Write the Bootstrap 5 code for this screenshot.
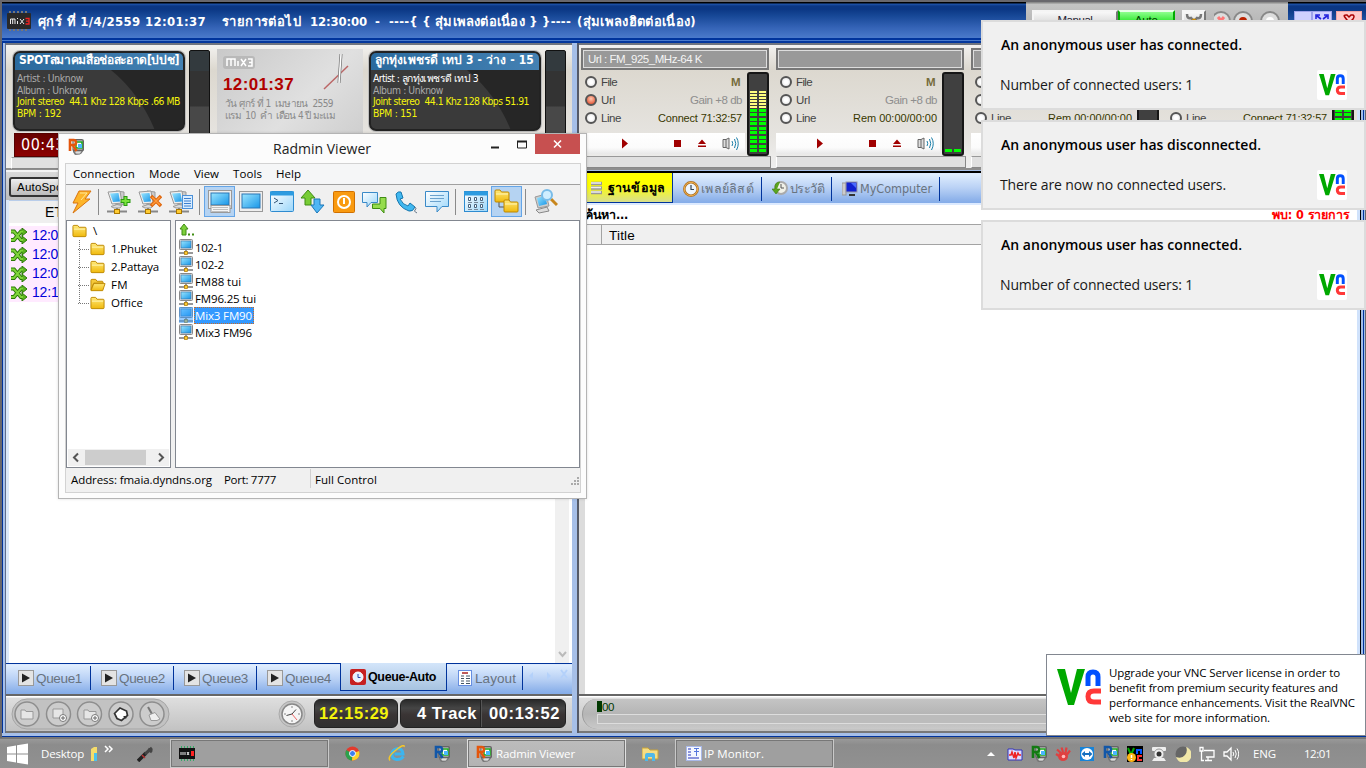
<!DOCTYPE html>
<html lang="th">
<head>
<meta charset="utf-8">
<title>MiX3 – Radmin Viewer</title>
<link href="https://cdn.jsdelivr.net/npm/bootstrap@5.3.0/dist/css/bootstrap.min.css" rel="stylesheet">
<style>
:root{--ui:"Open Sans","Noto Sans",sans-serif;--tahoma:"DejaVu Sans Condensed","DejaVu Sans",sans-serif;--arial:"Liberation Sans",Arial,sans-serif}
html,body{width:1366px;height:768px;overflow:hidden}
body{font:11.5px/1 var(--ui);color:#000;background:#7f7f83}
svg{display:block;flex:none}
[data-w]{white-space:pre;display:inline-block;flex:none}
/* small left gaps used between icons and labels */
.gn2{margin-left:-2px}.gn1{margin-left:-1px}.g1{margin-left:1px}.g2{margin-left:2px}.g3{margin-left:3px}.g5{margin-left:5px}.g6{margin-left:6px}.g7{margin-left:7px}.g9{margin-left:9px}.g10{margin-left:10px}.g12{margin-left:12px}.g14{margin-left:14px}.g16{margin-left:16px}.g22{margin-left:22px}.g28{margin-left:28px}.g106{margin-left:106px}.g188{margin-left:188px}
.desk{width:1366px;height:768px}
.mixer{height:738px;background:#a6bfe8;border-top:2px solid #69686d;border-left:2px solid #69686d;box-shadow:inset 1px 0 #00339b}
.titlebar{height:41px;background:linear-gradient(#000 0 1px,#1f55ac 2px,#0d3884 4px,#0b3784 7px,#174897 14px,#3362b5 25px,#4a7acb 36px,#00349c 36px 38px,#4a7acb 38px 39px,#04379c 39px 41px);font:bold 13px/39px var(--tahoma);color:#fff}
.titlebar .caption{padding-left:5px;background:inherit;border-radius:0 8px 0 0}
.applogo{margin-top:9px}
.topctl{width:262px;background:linear-gradient(#8c8c8c 0 1px,#c4c4c4 2px,#a9a9a9);padding:8px 0 0 6px}
.topctl .key{height:26px;border:2px solid #f5f5f5;border-right-color:#777;background:linear-gradient(#f8f8f8,#d4d4d4 60%);font:11.5px/17px var(--arial);color:#223}
.k1{width:88px}.k2{width:58px}.k3{width:25px}
.topctl .go{border-color:#e8ffe8 #0a0;background:linear-gradient(#8dff8d,#10e010 60%);color:#040}
.winctl{width:78px;border-radius:6px 6px 0 0;padding:9px 4px 0 6px}
.winctl div{height:24px;width:20px;background:#cfd1ff;border:1px solid #9ea3ea}
.winctl .x{width:26px;background:#ffc9c9;border-color:#f0a5a5}
.left{width:568px;margin-left:3px;border-left:1px solid #5e6d8c}
.right{width:780px;margin-left:5px;border-left:2px solid #555a68}
.edge{width:9px;background:linear-gradient(90deg,#d0e2fb 0 3px,#000 3px 4px,#a3bde6 4px 6px,#00339b 6px 7px,#a3bde6 7px 8px,#69686d 8px)}
.decks{height:127px;background:linear-gradient(#f3f2f0,#dcd8cf 20%,#e6e4e0 75%,#efefef);border-top:2px solid #70757f;border-bottom:2px solid #8e8e8e}
.decks.rowr{padding:3px 0 0 2px}
.cards{height:88px;padding:5px 0 0 7px}
.player{width:172px;height:80px;margin-top:1px;border:2px solid #222;border-radius:7px;background:radial-gradient(circle at 0 175%,#3a3a3a 0 150px,#262626 151px);color:#aaa;font:10.3px/11.5px var(--tahoma);overflow:hidden;box-shadow:0 0 0 1px #bbb}
.player h6{height:17px;margin:0 0 3px;padding:0 0 0 4px;font:bold 12px/15px var(--tahoma);color:#fff;background:linear-gradient(90deg,#2a6a9e,#4481b3)}
.player p{margin:0;padding-left:2px;height:11.5px}
.player .yel,.lcd.yel{color:#f4f40c}
.vu{width:21px;height:100px;border:1px solid #111;background:linear-gradient(#333a3e 0 20px,#333 20px 55px,#484848 56px);border-radius:2px}
.clock{width:146px;height:84px;margin:-1px 6px 0 7px;background:linear-gradient(135deg,#c9c9c9,#e0e0e0 60%,#cfcfcf);color:#8a8a8a;font:10px/12px var(--tahoma);padding:7px 6px 0}
.clock .top{height:16px}
.clock b{font:bold 17px/26px var(--arial);color:#b00000}
.hands{margin-top:-2px}
.redcount{width:60px;height:24px;margin-left:8px;background:linear-gradient(#600,#8c0000);border:1px solid #500;color:#fff;font:16px/22px var(--tahoma);padding-left:6px}
.sunk{width:190px;height:12px;margin-top:2px;background:#e0e0e0;border:1px solid #888;border-top-color:#999;border-left-color:#fff}
.left .sunk{width:90px;margin:0 0 0 5px}
.toolrow{height:30px;padding:5px 0 0 3px;background:linear-gradient(#d9d9d9,#bcbcbc);border-top:2px solid #f4f4f4}
.autob{width:90px;height:20px;border:2px solid #333;border-radius:3px;background:linear-gradient(#eee,#bbb);font:11.5px/16px var(--arial);padding-left:6px}
.qhead{height:23px;background:#efefef;font:14px/22px var(--arial);border-top:1px solid #b9cdea;padding-left:36px}
.qrow{height:19px;width:200px;background:#ffeaff;color:#0000d8;font:14px/19px var(--arial);gap:5px;padding-left:1px}
.qrow:nth-child(2){margin-top:3px}
.listbox{background:#fff;border-left:3px solid #dce9fa}
.sb{width:14px;background:#f0f0f0;margin-right:3px}
.tabs{height:31px;border-top:1px solid #00339b;background:linear-gradient(#e3f0ff,#b9d1f5 50%,#8db2ea 90%,#84ace8);box-shadow:inset 0 1px #dceaff}
.tabs .tb{width:83px;padding-left:10px;color:#68737f;font:13.5px/23px var(--arial);border-right:1px solid #00339b;height:24px;margin-top:2px}
.tabs .first{width:85px;padding-left:12px}
.tabs .nosep{border:0}
.tabs .cur{width:107px;padding-left:9px;border:1px solid #00339b;border-top:0;height:28px;margin-top:-1px;color:#000;font-weight:bold;font-size:12.5px;line-height:28px;background:linear-gradient(#d3e5fa,#a7c3e0)}
.tabs .lay{width:76px;padding-left:11px}
.foot{height:39px;border-top:2px solid #666;border-bottom:2px solid #777;background:linear-gradient(#fff 0 1px,#dedede 2px,#c2c2c2)}
.lcd{height:29px;border-radius:6px;background:linear-gradient(#2a2a2a,#454545 30%,#3a3434 55%,#303030);border:1px solid #222;color:#fff;font:bold 16.5px/27px var(--arial)}
.lcd.a{width:84px;margin-left:7px;padding-left:4px}
.lcd.b{width:166px;margin-left:2px;padding-left:16px}
.split{border-left:1px solid #222;box-shadow:inset 1px 0 #555;margin-left:3px;width:9px}
.deck{width:191px;margin-right:4px}
.deck .lab{height:22px;width:188px;background:#999;border:2px solid #777;box-shadow:inset 0 0 0 1px #ddd;color:#f4f4f4;font:11.5px/18px var(--arial);padding-left:5px}
.deck .opts{width:161px;height:58px;padding:3px 0 0 4px}
.deck .ln{height:18px;font:11.5px/18px var(--arial);color:#444}
.deck .m{color:#766c3c}.deck .gn{color:#8e8e8e}.deck .st{color:#383800;font-size:11px}
.rad{width:12px;height:12px;border:2px solid #555;border-radius:50%;background:radial-gradient(#fff 30%,#ddd);margin-right:4px;flex:none}
.rad.on{background:radial-gradient(circle at 50% 35%,#ffc9b0,#e04020)}
.deck .lv{width:22px;height:84px;border:2px solid #161616;border-radius:3px;background:#404040;padding:16px 1px 2px;margin:2px 0 -28px 5px}
.lv i{width:7px;height:62px;background:repeating-linear-gradient(0deg,#0f0 0 3px,#404040 3px 4.5px)}
.lv i.hot{background:repeating-linear-gradient(0deg,#0f0 0 3px,#404040 3px 4.5px) 0 18px,repeating-linear-gradient(0deg,#ffff80 0 2px,#404040 2px 3px) 0 0/7px 18px;background-repeat:no-repeat}
.lv i.low{height:3px;background:#0f0}
.strip{height:21px;width:164px;background:linear-gradient(#fff,#fbfbfb 70%,#e8e8e8);margin-top:5px}
.tabs.rtabs{height:32px;border-top:2px solid #000;margin-top:1px}
.rtabs .tb{font:12.5px/24px var(--tahoma);height:24px;margin-top:4px}
.rtabs .cur{width:94px;height:30px;padding-left:10px;background:linear-gradient(#ff0 40%,#d8df90);margin-top:0;font-weight:bold;line-height:29px}
.rtabs .t2{width:89px}.rtabs .t3{width:70px}.rtabs .t4{width:108px}
.dbpane{border-top:2px solid #dceaff;border-left:6px solid #dcdcdc}
.find{height:19px;font:bold 12.5px/19px var(--tahoma);padding-right:7px}
.hits{color:#f00}
.colhead{height:21px;background:#f0f0f0;border:solid #a3a3a3;border-width:1px 0;font:13.5px/21px var(--arial)}
.colhead div{width:17px;border-right:1px solid #a3a3a3}
.seek{width:800px;height:30px;margin:3px 0 0 3px;border-radius:15px 0 0 15px;background:linear-gradient(#c4c4c4,#b5b5b5 50%,#c9c9c9);padding:2px 0 0 14px;border-left:1px solid #999;color:#003800;font:11.5px/13px var(--arial)}
.seek .flag{width:5px;height:11px;background:#003800}
.seek .track{border:1px solid #ddd;height:10px;background:#bcbcbc}
.base{height:5px;background:linear-gradient(#a6bfe8 0 3px,#00339b 3px 4px,#777 4px)}
/* floating windows */
.radmin{left:58px;top:133px;width:529px;height:366px;background:#fcfcfc;border:1px solid #b4b4b4;box-shadow:0 0 3px #0002;padding:0 5px 5px 6px}
.rtitle{height:29px;font:14px/29px var(--ui);color:#222}
.rtitle .ric{margin:4px 0 0 3px}
.rclose{width:45px;height:20px;background:#c75050;margin-right:1px}
.ro{color:#e4560c}.rb{color:#1257a8}.rg{color:#137a13}
.rbody{border:1px solid #d2d2d2;background:#f0f0f0}
.menu{height:21px;background:#f5f6f7;border-bottom:1px solid #a0a0a0;line-height:20px;padding-left:7px;gap:14px}
.tools{height:35px;padding:0 0 2px 2px}
.tools .ib{width:31px;height:31px;display:flex;align-items:center;justify-content:center;flex:none}
.tools .ib:first-child{width:27px}
.tools .on{background:#b5d3f2;border:1px solid #64a5e7}
.tools .sp{width:1px;height:26px;background:#8a8a8a;margin:0 4px 0 3px;flex:none}
.panes{height:248px}
.pane{background:#fff;border:1px solid #828790}
.tree{width:105px}
.tree .root{height:19px;padding-left:5px}
.tree .nd{height:18px;line-height:18px;padding-left:11px}
.tree .nd:before{content:"";width:11px;border-top:1px dotted #777;margin-right:1px}
.twig{border-left:1px dotted #777;left:12px;top:19px;height:63px}
.files .it{height:17px;line-height:17px;padding-left:3px}
.files .up{height:18px;padding-top:2px}
.files .pick .hl{background:#39f;color:#fff;outline:1px dotted #c96b28;outline-offset:-1px;padding:0 2px 0 1px}
.hs{height:17px;background:#f0f0f0;margin:1px}
.status{height:23px;line-height:24px;padding-left:5px}
.status i{width:1px;background:#d0d0d0;margin:1px 4px 3px 34px}
.toastbox{left:981px;width:385px;height:90px;background:#f0f0f0;border:2px solid #dcdcdc;padding:13px 18px 0 18px;font-size:14px}
.toastbox strong{font-weight:600;line-height:20px;height:20px}
.toastbox .msg{margin-top:20px;line-height:20px;color:#181818;margin-left:-1px}
.toastbox .pic{width:30px;height:30px;margin:35px -1px 0 0;border-radius:2px}
.ta{top:20px}.tc{top:120px}.te{top:220px}
.upg{left:1046px;top:654px;width:320px;height:82px;background:#fff;border:1px solid #828790;padding:10px;line-height:15px}
.upg svg{margin:4px 8px 0 0}
.bar{height:30px;background:linear-gradient(#999,#8c8c8c 20%,#919191);color:#fff;border-top:1px solid #777}
.task{width:159px;height:29px;border:1px solid #c9c9c9;outline:1px solid #777;outline-offset:-2px;background:#9f9f9f;padding-left:8px;flex:none}
.task.act{background:linear-gradient(#bcbcbc,#b3b3b3);border-color:#e0e0e0}
.tray{margin-right:35px}
.tray svg{margin:0 4px}
.tray .wide{margin-right:3px}
</style>
</head>
<body>
<svg width="0" height="0" class="position-absolute">
<defs>
<linearGradient id="gs" x1="0" y1="0" x2="1" y2="1"><stop offset="0" stop-color="#9be6ff"/><stop offset="1" stop-color="#1896e8"/></linearGradient>
<linearGradient id="gf" x1="0" y1="0" x2="0" y2="1"><stop offset="0" stop-color="#ffe97a"/><stop offset="1" stop-color="#f0b90c"/></linearGradient>
<linearGradient id="gw" x1="0" y1="0" x2="1" y2="1"><stop offset="0" stop-color="#fff"/><stop offset="1" stop-color="#9ad6fa"/></linearGradient>
<symbol id="vnc" viewBox="0 0 44 37"><path d="M0 0H8L14 24 20 0H28L17 36H11Z" fill="#00a800"/><path d="M31 17V8Q31 3 36 3T41 8V17" fill="none" stroke="#0050ff" stroke-width="5"/><path d="M44 22H37Q31 22 31 27.500T37 33H44" fill="none" stroke="#ff3838" stroke-width="5"/></symbol>
<symbol id="mx" viewBox="0 0 24 20"><path d="M2 1H22M2 19H22" stroke="#777" stroke-width="2" stroke-dasharray="2 2"/><rect y="2" width="24" height="16" rx="1" fill="#292929"/><path d="M3.500 13V8H8V13M5.700 8V13M10.500 10V13M10.500 7V8M13 8L17 13M17 8L13 13" stroke="#eee" fill="none"/><path d="M18.500 7.500H22V13H18.500M19 10.200H22" stroke="#e22" stroke-width="1.300" fill="none"/></symbol>
<symbol id="fold" viewBox="0 0 16 14"><path d="M1 2Q1 1 2 1H6L7.500 3H14Q15 3 15 4V12Q15 13 14 13H2Q1 13 1 12Z" fill="url(#gf)" stroke="#bd8700"/><path d="M2 5H14" stroke="#fff6b8"/></symbol>
<symbol id="foldo" viewBox="0 0 17 14"><path d="M1 12V2Q1 1 2 1H6L7.500 3H13Q14 3 14 5H4L1 12Z" fill="#f5c93a" stroke="#bd8700"/><path d="M4 5.500H16L13.500 13H1Z" fill="url(#gf)" stroke="#bd8700"/></symbol>
<symbol id="pc" viewBox="0 0 14 16"><rect x=".5" y=".5" width="13" height="10" rx="1" fill="#ddd" stroke="#888"/><rect x="2" y="2" width="10" height="7" fill="url(#gs)" stroke="#3570a5" stroke-width=".6"/><path d="M7 11V14M0 14H14" stroke="#777" stroke-width="1.500"/><rect x="5.500" y="12.500" width="3" height="3" fill="#fc3" stroke="#a70" stroke-width=".7"/></symbol>
<symbol id="pcb" viewBox="0 0 24 24"><path d="M9 1L17 2V14L9 16Z" fill="#ccc" stroke="#999"/><path d="M1 2L13 1 15 13 5 14Z" fill="#eee" stroke="#999"/><path d="M3 3.500L11.500 3 13 11.500 6 12Z" fill="url(#gs)"/><path d="M4 16.500L10 14.500 15 15.500 13 18H7Z" fill="#ddd" stroke="#999"/><path d="M0 21.500H20M10 18V21" stroke="#888" stroke-width="2"/><rect x="7.500" y="19.500" width="5" height="4" fill="#fc3" stroke="#a70"/></symbol>
<symbol id="r1" viewBox="0 0 17 18"><path d="M5 1H14L16 3V12L13 16 7 17 5 14Z" fill="#777"/><rect x="5" y="2" width="10" height="10" fill="#e8e8e8" stroke="#555"/><rect x="8" y="4" width="6" height="6" fill="#fff" stroke="#1aa51a" stroke-width="1.500"/><path d="M10 6H14V10H10Z" fill="#49b7ff"/><path d="M6 13H14L12 16H8Z" fill="#ddd" stroke="#666" stroke-width=".6"/><path d="M2 13V2H5.500Q8 2 8 4.500T5.500 7H2M5 7L8.500 13" fill="none" stroke="currentColor" stroke-width="2.600"/></symbol>
<symbol id="shuf" viewBox="0 0 17 16"><path d="M1 3.500H4L11 12H13M1 12H4L11 3.500H13" fill="none" stroke="#2c7a08" stroke-width="4"/><path d="M12 0L17 4 12 8ZM12 8L17 12 12 16Z" fill="#5db520" stroke="#2c7a08"/><path d="M1 3.500H4L11 12H13M1 12H4L11 3.500H13" fill="none" stroke="#7fd43a" stroke-width="2"/></symbol>
<symbol id="play" viewBox="0 0 16 16"><rect x=".5" y=".5" width="15" height="15" fill="#e4e4e4" stroke="#999"/><path d="M4 3.500L12 8 4 12.500Z" fill="#222"/></symbol>
<symbol id="trans" viewBox="0 0 164 21"><path d="M41 5.500L47 10.500 41 15.500Z" fill="#a00000"/><rect x="93" y="7" width="7" height="7" fill="#a00000"/><path d="M117 11L121 6.500 125 11ZM117 12.500H125V14H117Z" fill="#a00000"/><path d="M142 6.500H145V14.500H142ZM145 6.500L148 5V16L145 14.500" fill="#ddd" stroke="#666"/><path d="M151 8Q152.500 10.500 151 13M153.500 6Q156 10.500 153.500 15M155.500 4.500Q159 10.500 155.500 17" fill="none" stroke="#1a7ea8"/></symbol>
</defs>
</svg>

<div class="desk d-flex flex-column position-relative overflow-hidden">
<div class="mixer d-flex flex-column">
  <div class="titlebar d-flex">
    <div class="caption d-flex flex-grow-1">
      <svg width="25" height="20" class="applogo me-2"><use href="#mx" width="24" height="20"/></svg><span data-w="168" class="gn2">ศุกร์ ที่ 1/4/2559 12:01:37</span>
      <span class="ms-3" data-w="79">รายการต่อไป</span><span class="g9" data-w="57">12:30:00</span><span class="ms-2" data-w="6">-</span><span class="ms-2" data-w="182">----{ { สุ่มเพลงต่อเนื่อง } }----</span><span class="g6" data-w="119">(สุ่มเพลงฮิตต่อเนื่อง)</span>
    </div>
    <div class="topctl d-flex align-items-start">
      <div class="key k1 text-center"><span data-w="35">Manual</span></div>
      <div class="key go k2 text-center"><span data-w="23">Auto</span></div>
      <div class="key k3 g7"><svg width="20" height="18"><path d="M3 2Q3 7 7 6L15 15M17 2Q17 7 13 6L5 15" fill="none" stroke="#777" stroke-width="2.500"/><circle cx="10" cy="9" r="2.500" fill="#c80"/></svg></div>
      <svg width="74" height="24" class="ms-2"><g stroke="#888" stroke-width="2" fill="#ddd"><circle cx="7" cy="11" r="9"/><circle cx="29" cy="11" r="9"/><circle cx="56" cy="11" r="9"/></g><path d="M4 7L10 14M10 7L4 14" stroke="#f77" stroke-width="3"/><circle cx="29" cy="11" r="4" fill="#b20"/><circle cx="56" cy="11" r="4" fill="#fff"/></svg>
    </div>
    <div class="winctl d-flex"><div></div><div><svg width="18" height="16"><path d="M3 7V3H7M11 3H15V7M4 4L8 7M14 4L10 7M3 10V14" fill="none" stroke="#22d" stroke-width="1.600"/></svg></div><div class="x ms-1"><svg width="24" height="16"><path d="M7 4Q7 3 9 3H10L12 5 14 3H16Q18 4 16 7L14 9 16 11M7 4L10 8 7 11" fill="none" stroke="#a00" stroke-width="1.500"/></svg></div></div>
  </div>

  <div class="d-flex flex-grow-1">
    <div class="left d-flex flex-column">
      <div class="decks">
        <div class="cards d-flex">
          <div class="player"><h6><span data-w="160">SPOTสมาคมสื่อช่อสะอาด[ปปช]</span></h6><p><span data-w="66">Artist : Unknow</span></p><p><span data-w="70">Album : Unknow</span></p><p class="yel"><span data-w="163">Joint stereo  44.1 Khz 128 Kbps .66 MB</span></p><p class="yel"><span data-w="44">BPM : 192</span></p></div>
          <div class="vu ms-1"></div>
          <div class="clock"><div class="top d-flex justify-content-between"><svg width="34" height="14"><rect width="32" height="13" rx="3" fill="#b9b9b9"/><path d="M4 10V3H12V10M8 3V10M15 5V10M18 3L23 10M23 3L18 10M25 3H29V10H25M26 6.500H29" fill="none" stroke="#fff" stroke-width="1.500"/></svg><svg width="36" height="44" class="hands"><path d="M3 35L27 12" stroke="#b66" stroke-width="1.500"/><path d="M20 0L18 29" stroke="#777" stroke-width="3"/><path d="M20 0L18 29" stroke="#fff" stroke-width="1.500"/></svg></div><b class="d-block"><span data-w="71">12:01:37</span></b><div class="g2"><span data-w="108">วัน ศุกร์ ที่ 1  เมษายน  2559</span></div><div class="g2"><span data-w="110">แรม  10  ค่ำ  เดือน 4 ปี มะแม</span></div></div>
          <div class="player"><h6><span data-w="159">ลูกทุ่งเพชรดี เทป 3 - ว่าง - 15</span></h6><p class="text-white"><span data-w="105">Artist : ลูกทุ่งเพชรดี เทป 3</span></p><p><span data-w="70">Album : Unknow</span></p><p class="yel"><span data-w="156">Joint stereo  44.1 Khz 128 Kbps 51.91</span></p><p class="yel"><span data-w="44">BPM : 151</span></p></div>
          <div class="vu ms-1"></div>
        </div>
        <div class="redcount"><span data-w="44">00:43</span></div>
        <div class="sunk"></div>
      </div>
      <div class="toolrow"><div class="autob"><span data-w="49">AutoSpot</span></div></div>
      <div class="d-flex flex-grow-1 listbox">
        <div class="flex-grow-1">
          <div class="qhead">ETA</div>
          <div class="qrow d-flex align-items-center"><svg width="17" height="16"><use href="#shuf" width="17" height="16"/></svg><span data-w="52">12:01:37</span></div>
          <div class="qrow d-flex align-items-center"><svg width="17" height="16"><use href="#shuf" width="17" height="16"/></svg><span data-w="52">12:04:54</span></div>
          <div class="qrow d-flex align-items-center"><svg width="17" height="16"><use href="#shuf" width="17" height="16"/></svg><span data-w="52">12:08:20</span></div>
          <div class="qrow d-flex align-items-center"><svg width="17" height="16"><use href="#shuf" width="17" height="16"/></svg><span data-w="52">12:11:48</span></div>
        </div>
        <div class="sb d-flex align-items-end"><svg width="14" height="16"><path d="M4 5L7.500 9 11 5" fill="none" stroke="#bbb" stroke-width="2"/></svg></div>
      </div>
      <div class="tabs d-flex">
        <div class="tb first d-flex align-items-center"><svg width="16" height="16" class="me-1"><use href="#play" width="16" height="16"/></svg><span data-w="46" class="gn2">Queue1</span></div>
        <div class="tb d-flex align-items-center"><svg width="16" height="16" class="me-1"><use href="#play" width="16" height="16"/></svg><span data-w="46" class="gn2">Queue2</span></div>
        <div class="tb d-flex align-items-center"><svg width="16" height="16" class="me-1"><use href="#play" width="16" height="16"/></svg><span data-w="46" class="gn2">Queue3</span></div>
        <div class="tb nosep d-flex align-items-center"><svg width="16" height="16" class="me-1"><use href="#play" width="16" height="16"/></svg><span data-w="46" class="gn2">Queue4</span></div>
        <div class="tb cur d-flex align-items-center"><svg width="16" height="16" class="me-1"><rect width="16" height="16" rx="2" fill="#c62020"/><circle cx="8" cy="8" r="5" fill="#e5f0ff" stroke="#fff"/><path d="M8 5V8.500H10.500" fill="none" stroke="#24a"/></svg><span data-w="68" class="gn2">Queue-Auto</span></div>
        <div class="tb lay d-flex align-items-center"><svg width="14" height="16" class="me-1"><rect x=".5" y=".5" width="13" height="15" fill="#fff" stroke="#668ee0"/><path d="M4 3H10" stroke="#a22" stroke-width="1.500"/><path d="M3 6H6M3 8.500H6M3 11H6M3 13.500H6M8 6H12M8 8.500H12M8 11H12M8 13.500H12" stroke="#456"/></svg><span data-w="41" class="gn1">Layout</span></div>
        <svg width="46" height="24"><path d="M10 8L6 12 10 16ZM24 8L28 12 24 16Z" fill="#b4d1fa"/><path d="M38 6L44 14M44 6L38 14" stroke="#b4d1fa" stroke-width="2"/></svg>
      </div>
      <div class="foot d-flex align-items-center">
        <svg width="160" height="32" class="g5"><rect x="1" y="1" width="157" height="30" rx="15" fill="#c2c2c2" stroke="#a5a5a5"/><g fill="#ccc" stroke="#8e8e8e" stroke-width="1.500"><circle cx="16" cy="16" r="12"/><circle cx="47.500" cy="16" r="12"/><circle cx="78.500" cy="16" r="12"/><circle cx="110" cy="16" r="12"/><circle cx="141" cy="16" r="12"/></g><g fill="#e6e6e6" stroke="#999"><path d="M10 12H14L15 13.500H22V21H10ZM42 11H52V20H42ZM73 12H77L78 13.500H85V21H73Z"/></g><g fill="#fff" stroke="#777"><circle cx="52" cy="20" r="3.500"/><circle cx="84" cy="20" r="3.500"/></g><path d="M50 20H54M52 18V22M82 20H86M84 18V22" stroke="#666"/><path d="M103.500 15.500L109 10 115.500 13 116.500 17.500 110.500 22.500 106 20.500Z" fill="#fff" stroke="#333" stroke-width="1.700"/><path d="M112 18L116 18 115 21Z" fill="#333"/><path d="M137 9L141 16" stroke="#777" stroke-width="2"/><path d="M138 17L144 14.500 149 21 146 22.500H140Z" fill="#eee" stroke="#999"/></svg>
        <svg width="30" height="30" class="g106"><circle cx="15" cy="15" r="13" fill="#c5c5c5" stroke="#aaa"/><circle cx="15" cy="15" r="10" fill="#f5f5f5" stroke="#888" stroke-width="1.500"/><path d="M15 15L19 10.500M15 15L9.500 16.500" stroke="#444" fill="none"/><path d="M15 15L20 21" stroke="#e66"/><path d="M15 7V9M15 21V23M7 15H9M21 15H23" stroke="#888"/></svg>
        <div class="lcd a yel"><span data-w="70">12:15:29</span></div>
        <div class="lcd b d-flex"><span data-w="60">4 Track</span><span class="split"></span><span data-w="71">00:13:52</span></div>
      </div>
    </div>

    <div class="right d-flex flex-column">
      <div class="decks rowr d-flex overflow-hidden">
        <div class="deck flex-shrink-0"><div class="lab"><span data-w="114">Url : FM_925_MHz-64 K</span></div>
          <div class="d-flex"><div class="opts"><div class="ln d-flex align-items-center"><i class="rad"></i><span data-w="16">File</span><b class="ms-auto m" data-w="11">M</b></div><div class="ln d-flex align-items-center"><i class="rad on"></i><span data-w="14">Url</span><span class="ms-auto gn" data-w="52">Gain +8 db</span></div><div class="ln d-flex align-items-center"><i class="rad"></i><span data-w="20">Line</span><span class="ms-auto st" data-w="84">Connect 71:32:57</span></div></div>
          <div class="lv d-flex align-items-end justify-content-between"><i class="hot"></i><i class="hot"></i></div></div>
          <div class="strip"><svg width="164" height="21"><use href="#trans" width="164" height="21"/></svg></div><div class="sunk"></div></div>
        <div class="deck flex-shrink-0"><div class="lab"></div>
          <div class="d-flex"><div class="opts"><div class="ln d-flex align-items-center"><i class="rad"></i><span data-w="16">File</span><b class="ms-auto m" data-w="11">M</b></div><div class="ln d-flex align-items-center"><i class="rad"></i><span data-w="14">Url</span><span class="ms-auto gn" data-w="52">Gain +8 db</span></div><div class="ln d-flex align-items-center"><i class="rad"></i><span data-w="20">Line</span><span class="ms-auto st" data-w="84">Rem 00:00/00:00</span></div></div>
          <div class="lv d-flex align-items-end justify-content-between"><i class="low"></i><i class="low"></i></div></div>
          <div class="strip"><svg width="164" height="21"><use href="#trans" width="164" height="21"/></svg></div><div class="sunk"></div></div>
        <div class="deck flex-shrink-0"><div class="lab"></div>
          <div class="d-flex"><div class="opts"><div class="ln d-flex align-items-center"><i class="rad"></i></div><div class="ln d-flex align-items-center"><i class="rad"></i></div><div class="ln d-flex align-items-center"><i class="rad"></i><span data-w="20">Line</span><span class="ms-auto st" data-w="84">Rem 00:00/00:00</span></div></div>
          <div class="lv d-flex align-items-end justify-content-between"><i class="low"></i><i class="low"></i></div></div>
          <div class="strip"></div><div class="sunk"></div></div>
        <div class="deck flex-shrink-0"><div class="lab"></div>
          <div class="d-flex"><div class="opts"><div class="ln d-flex align-items-center"><i class="rad"></i></div><div class="ln d-flex align-items-center"><i class="rad"></i></div><div class="ln d-flex align-items-center"><i class="rad"></i><span data-w="20">Line</span><span class="ms-auto st" data-w="84">Connect 71:32:57</span></div></div>
          <div class="lv d-flex align-items-end justify-content-between"><i></i><i></i></div></div>
          <div class="strip"></div><div class="sunk"></div></div>
      </div>
      <div class="tabs rtabs d-flex">
        <div class="tb cur d-flex align-items-center"><svg width="14" height="14"><path d="M1 2.500H12M1 7H12M1 11.500H12" stroke="#999" stroke-width="3.500"/><path d="M1 2H11M1 6.500H11M1 11H11" stroke="#eee" stroke-width="1.500"/></svg><span class="ms-1" data-w="57">ฐานข้อมูล</span></div>
        <div class="tb t2 d-flex align-items-center"><svg width="16" height="16" class="me-1"><circle cx="8" cy="8" r="6.700" fill="#eef6ff" stroke="#b0742a" stroke-width="2.500"/><circle cx="8" cy="8" r="6.700" fill="none" stroke="#f0b04a"/><path d="M8 4V8.500H11" fill="none" stroke="#345" stroke-width="1.200"/></svg><span data-w="53" class="gn2">เพลย์ลิสต์</span></div>
        <div class="tb t3 d-flex align-items-center"><svg width="16" height="16" class="me-1"><circle cx="9" cy="7" r="6" fill="#f1f1e8" stroke="#aaa" stroke-width="2"/><path d="M9 3V7H12" fill="none" stroke="#555"/><path d="M8 1Q2 1 3 8H0L4 13 8 8H5" fill="#5aa51e" stroke="#3a780e" stroke-width=".6"/></svg><span data-w="34" class="gn2">ประวัติ</span></div>
        <div class="tb t4 d-flex align-items-center"><svg width="18" height="16"><rect y="2" width="4" height="12" fill="#ccc" stroke="#999"/><rect x="4" y="1" width="11" height="10" fill="#1020d0" stroke="#99a"/><path d="M9 2L14 7V2Z" fill="#4a6aff"/><path d="M7 14H13" stroke="#333" stroke-width="2"/></svg><span data-w="72">MyComputer</span></div>
      </div>
      <div class="dbpane d-flex flex-column flex-grow-1 bg-white">
        <div class="find d-flex justify-content-between"><span data-w="43">ค้นหา...</span><span data-w="78" class="hits">พบ: 0 รายการ</span></div>
        <div class="colhead d-flex"><div></div><span class="g7" data-w="26">Title</span></div>
      </div>
      <div class="foot d-flex"><div class="seek"><div class="d-flex"><span class="flag"></span><span data-w="12">00</span></div><div class="track"></div></div></div>
    </div>
    <div class="edge"></div>
  </div>
  <div class="base"></div>
</div>

<!-- taskbar -->
<div class="bar d-flex align-items-center">
  <svg width="22" height="22" class="g7"><path d="M0 4L9 2.500V10.500H0ZM10 2.300L21 .5V10.500H10ZM0 11.500H9V19.500L0 18ZM10 11.500H21V21.500L10 19.700Z" fill="#fff"/></svg>
  <span data-w="43" class="g12">Desktop</span>
  <svg width="24" height="20" class="g7"><path d="M0 5L3 3H6V17H0Z" fill="#f5dc6a"/><path d="M3 9H6V17H3Z" fill="#4bc2ee"/><path d="M14 2L17 5 14 8M18 2L21 5 18 8" fill="none" stroke="#fff" stroke-width="1.500"/></svg>
  <svg width="17" height="16" class="g22"><path d="M1 15L9 7" stroke="#222" stroke-width="3.500"/><path d="M8 8L15 2M11 3L15 6" stroke="#444" stroke-width="3"/><path d="M5 9L8 12" stroke="#b33" stroke-width="1.500"/></svg>
  <div class="task d-flex align-items-center g16"><svg width="17" height="15"><path d="M2 1H15M2 14H15" stroke="#3a6" stroke-width="2" stroke-dasharray="1 2"/><rect y="2" width="16" height="11" fill="#111"/><path d="M2 9V6M4 9V6M6 6V9M8 6L10 9M10 6L8 9" stroke="#eee"/><rect x="12" y="5" width="3" height="5" fill="#f22"/></svg></div>
  <svg width="15" height="15" class="g16"><circle cx="7.500" cy="7.500" r="7" fill="#e33b2e"/><path d="M7.500 7.500L1.300 4A7 7 0 0 0 7 14.500Z" fill="#2ba24c"/><path d="M7.500 7.500L14 5A7 7 0 0 1 7 14.500Z" fill="#fdd32a"/><circle cx="7.500" cy="7.500" r="3" fill="#3c7ff0" stroke="#fff"/></svg>
  <svg width="18" height="17" class="g28"><path d="M15.500 11.500Q12.500 15 8.500 14.500Q4 14 4 9.300T9.500 3.500Q14.500 3.500 15 9H6.500" fill="none" stroke="#3cb5ef" stroke-width="3"/><path d="M2 15.500Q-1 12 8 5T16 2" fill="none" stroke="#f2c62b" stroke-width="1.500"/></svg>
  <svg width="17" height="18" class="g28 rb"><use href="#r1" width="17" height="18"/></svg>
  <div class="task act d-flex align-items-center g16"><svg width="17" height="18" class="ro"><use href="#r1" width="17" height="18"/></svg><span data-w="79" class="g3">Radmin Viewer</span></div>
  <svg width="17" height="15" class="g16"><path d="M0 2H6L8 4H16V13H0Z" fill="#f5dd83" stroke="#c7a33a"/><path d="M3 15V9Q3 7 5 7H11Q13 7 13 9V15H10V11H6V15Z" fill="#4fb8e8"/></svg>
  <div class="task d-flex align-items-center g16"><svg width="17" height="16" class="g2"><rect x=".5" y=".5" width="15" height="14" fill="#f4f7ff" stroke="#a9b8e8"/><path d="M2 3H5M2 6H5M2 9H5M2 12H13" stroke="#23b"/><path d="M8 2.500H13M8 5.500H13M10.500 3V10" stroke="#57d"/></svg><span data-w="60" class="g1">IP Monitor.</span></div>
  <div class="tray ms-auto d-flex align-items-center">
    <svg width="16" height="16"><path d="M4 10L8 6 12 10Z" fill="#fff"/></svg>
    <svg width="16" height="16"><path d="M1 3H6L8 4H15V14H1Z" fill="#dcdcff" stroke="#33b"/><path d="M2 9H4L5 6 7 12 8 6 9 12 11 7 12 9H14" stroke="#e22" stroke-width="1.500" fill="none"/></svg>
    <svg width="17" height="18" class="rg wide"><use href="#r1" width="17" height="18"/></svg>
    <svg width="16" height="16"><ellipse cx="8" cy="10.500" rx="5" ry="4.500" fill="#e04040"/><path d="M1 8L4 10M2 3.500L6 7M6.500 1.500L8 6M11.500 1.500L10.500 7M15 4.500L12 8.500" stroke="#e04040" stroke-width="2.200"/><circle cx="8.500" cy="10.500" r="1.800" fill="#fbb"/></svg>
    <svg width="16" height="16"><rect x="1" y="1" width="14" height="14" fill="#1783d8"/><circle cx="8" cy="8" r="6" fill="#fff"/><path d="M2.500 8L6 5V7H10V5L13.500 8 10 11V9H6V11Z" fill="#1670c0"/></svg>
    <svg width="17" height="18" class="rb wide"><use href="#r1" width="17" height="18"/></svg>
    <svg width="16" height="16"><rect width="16" height="16" fill="#000"/><path d="M1 2L4 9 7 2" fill="none" stroke="#0a0" stroke-width="2"/><path d="M10 8V4H14V8" fill="none" stroke="#05f" stroke-width="2"/><path d="M15 10H11V14H15" fill="none" stroke="#f33" stroke-width="2"/><circle cx="4.500" cy="11.500" r="4.500" fill="#fdb515"/><path d="M4.500 9V12M4.500 13V14" stroke="#fff" stroke-width="1.500"/></svg>
    <svg width="16" height="16"><rect x="1" y="1" width="14" height="4" rx="1" fill="#eee"/><circle cx="8" cy="8" r="5" fill="#eee" stroke="#999"/><circle cx="8" cy="8" r="2.500" fill="#333"/><path d="M1 15L3 12H13L15 15Z" fill="#eee"/></svg>
    <svg width="16" height="16"><circle cx="8" cy="8" r="7.500" fill="#666"/><path d="M11 1A8 8 0 1 1 1 11Q7 13 10 9T11 1Z" fill="#f1e7a8"/></svg>
    <svg width="16" height="16"><path d="M5 4.500H15V11H7M9 11V14M6 14.500H13M1 1.500H4V5H1ZM2.500 5V14.500H5" fill="none" stroke="#fff" stroke-width="1.300"/></svg>
    <svg width="16" height="16"><path d="M1 6H4L8 2V14L4 10H1Z" fill="none" stroke="#fff" stroke-width="1.300"/><path d="M10 6Q11.500 8 10 10M12 4Q14.500 8 12 12M14 2.500Q17.500 8 14 13.500" fill="none" stroke="#fff"/></svg>
    <span data-w="23" class="g10">ENG</span><span data-w="27" class="g28">12:01</span>
  </div>
</div>

<!-- Radmin window -->
<div class="radmin position-absolute d-flex flex-column">
  <div class="rtitle d-flex"><svg width="17" height="18" class="ric ro"><use href="#r1" width="17" height="18"/></svg><span data-w="98" class="g188">Radmin Viewer</span>
    <svg width="45" height="20" class="ms-auto"><path d="M1 13.500H9" stroke="#222" stroke-width="2"/><path d="M27.500 7.500H36.500V14H27.500Z" fill="none" stroke="#222"/><path d="M27 7.500H37" stroke="#222" stroke-width="2"/></svg>
    <div class="rclose"><svg width="45" height="20"><path d="M19 6.500L26 13.500M26 6.500L19 13.500" stroke="#fff" stroke-width="1.600"/></svg></div></div>
  <div class="rbody flex-grow-1 d-flex flex-column">
    <div class="menu d-flex"><span data-w="62">Connection</span><span data-w="31">Mode</span><span data-w="25">View</span><span data-w="29">Tools</span><span data-w="25">Help</span></div>
    <div class="tools d-flex align-items-center">
      <div class="ib"><svg width="22" height="24"><path d="M8 1H20L14 9H19L2 23 7 13H2Z" fill="#fdb52a" stroke="#d9730e"/><path d="M9 3H16L10 10" fill="none" stroke="#ffe79a"/></svg></div>
      <i class="sp"></i>
      <div class="ib"><svg width="24" height="24"><use href="#pcb" width="24" height="24"/><path d="M18.500 6V16M13.500 11H23.500" stroke="#2a9a10" stroke-width="4"/><path d="M18.500 7V15M14.500 11H22.500" stroke="#7be33c" stroke-width="2"/></svg></div>
      <div class="ib"><svg width="24" height="24"><use href="#pcb" width="24" height="24"/><path d="M13 6L23 16M23 6L13 16" stroke="#e0660c" stroke-width="3.500"/><path d="M14 7L22 15M22 7L14 15" stroke="#ff9a3a" stroke-width="1.500"/></svg></div>
      <div class="ib"><svg width="24" height="24"><use href="#pcb" width="24" height="24"/><rect x="13.500" y="5.500" width="10" height="13" fill="#d9edff" stroke="#4a90d8"/><path d="M15 8.500H22M15 11H22M15 13.500H22M15 16H22" stroke="#3a7fd0"/></svg></div>
      <i class="sp"></i>
      <div class="ib on"><svg width="24" height="26"><rect x=".5" y="1.500" width="23" height="18" fill="#eee" stroke="#999"/><rect x="3" y="4" width="18" height="12" fill="url(#gs)" stroke="#2a77b5"/><rect x="3" y="16.500" width="19" height="7" fill="#f4f4f4" stroke="#999"/><path d="M4.500 18.500H20M5.500 20.500H20M4.500 22.500H20" stroke="#888" stroke-dasharray="1 1"/></svg></div>
      <div class="ib"><svg width="24" height="21"><rect x=".5" y=".5" width="23" height="20" fill="#eee" stroke="#999"/><rect x="3" y="3" width="18" height="14" fill="url(#gs)" stroke="#2a77b5"/></svg></div>
      <div class="ib"><svg width="24" height="22"><rect x=".5" y=".5" width="23" height="20" rx="1" fill="url(#gw)" stroke="#2d8bd0"/><path d="M0 2.500H24" stroke="#2d9be0" stroke-width="4"/><path d="M4 7L8 9.500 4 12M9 12.500H13" fill="none" stroke="#357"/></svg></div>
      <div class="ib"><svg width="25" height="26"><path d="M8 1L15 9H11V16H5V9H1Z" fill="#78cc35" stroke="#3f8d12"/><path d="M14 10H20V16H24L17 24 11 16H14Z" fill="#4fb6f4" stroke="#1c77b8"/></svg></div>
      <div class="ib"><svg width="22" height="22"><rect x=".5" y=".5" width="21" height="21" rx="1" fill="#f99a10" stroke="#d07000"/><circle cx="11" cy="11" r="6" fill="none" stroke="#fff" stroke-width="2"/><path d="M11 7V13" stroke="#fff" stroke-width="2"/></svg></div>
      <div class="ib"><svg width="25" height="24"><path d="M.5 2.500H15.500V12.500H9L5 17V12.500H.5Z" fill="url(#gw)" stroke="#3a8ac8"/><path d="M18 7.500H24V18.500H22V23L18 18.500H10.500V14H18Z" fill="#95dc4d" stroke="#3f8d12"/></svg></div>
      <div class="ib"><svg width="24" height="24"><path d="M2 4Q4 1 7 2L9 8 6 9Q9 15 14 16L16 13 21 17Q19 22 15 21Q3 17 2 4Z" fill="#41b8f0" stroke="#1676ad"/><path d="M21 17Q23 19 21 20T23 23" fill="none" stroke="#678"/></svg></div>
      <div class="ib"><svg width="24" height="24"><path d="M.5 1.500H23.500V16.500H17L12 22V16.500H.5Z" fill="url(#gw)" stroke="#3a8ac8"/><path d="M5 5.500H19M5 8.500H19M5 11.500H16" stroke="#6ba2cd"/></svg></div>
      <i class="sp"></i>
      <div class="ib"><svg width="24" height="22"><rect x=".5" y=".5" width="23" height="20" fill="url(#gw)" stroke="#2d8bd0"/><path d="M0 2.500H24" stroke="#2d9be0" stroke-width="4"/><g fill="#fff" stroke="#47627c"><path d="M4.500 6.500H6.500V9.500H4.500ZM10.500 6.500H12.500V9.500H10.500ZM16.500 6.500H18.500V9.500H16.500ZM4.500 13.500H6.500V16.500H4.500ZM10.500 13.500H12.500V16.500H10.500ZM16.500 13.500H18.500V16.500H16.500Z"/></g><path d="M4 11.500H8M10 11.500H14M16 11.500H20M4 18.500H8M10 18.500H14M16 18.500H20" stroke="#789"/></svg></div>
      <div class="ib on"><svg width="25" height="25"><path d="M5 12V18H10" fill="none" stroke="#555"/><svg width="16" height="14"><use href="#fold" width="16" height="14"/></svg><svg x="9" y="10" width="16" height="14"><use href="#fold" width="16" height="14"/></svg></svg></div>
      <i class="sp"></i>
      <div class="ib"><svg width="25" height="25"><path d="M2 8L13 5 16 17 5 19Z" fill="#ccc" stroke="#999"/><path d="M4 9L12 7 14 15 6 17Z" fill="url(#gs)"/><path d="M3 21L14 18 16 22 6 24Z" fill="#ddd" stroke="#888"/><path d="M18 10L24 16" stroke="#c8861c" stroke-width="3"/><circle cx="14" cy="6" r="5" fill="#cfeeff" stroke="#79bce8" stroke-width="2"/></svg></div>
    </div>
    <div class="panes d-flex">
      <div class="pane tree position-relative d-flex flex-column"><div class="twig position-absolute"></div>
        <div class="root d-flex align-items-center"><svg width="15" height="14"><use href="#fold" width="15" height="14"/></svg><span class="g6">\</span></div>
        <div class="nd d-flex align-items-center"><svg width="15" height="14" class="me-1"><use href="#fold" width="15" height="14"/></svg><span data-w="46" class="g2">1.Phuket</span></div>
        <div class="nd d-flex align-items-center"><svg width="15" height="14" class="me-1"><use href="#fold" width="15" height="14"/></svg><span data-w="48" class="g2">2.Pattaya</span></div>
        <div class="nd d-flex align-items-center"><svg width="17" height="14" class="me-1"><use href="#foldo" width="16" height="14"/></svg><span data-w="17">FM</span></div>
        <div class="nd d-flex align-items-center"><svg width="15" height="14" class="me-1"><use href="#fold" width="15" height="14"/></svg><span data-w="32" class="g2">Office</span></div>
        <div class="hs mt-auto"><svg width="101" height="16"><path d="M10 4.500L6 8.500 10 12.500M91 4.500L95 8.500 91 12.500" fill="none" stroke="#555" stroke-width="2"/><rect x="17" y="1" width="61" height="15" fill="#cdcdcd"/></svg></div>
      </div>
      <div class="pane files flex-grow-1 ms-1">
        <div class="it up"><svg width="16" height="14"><path d="M5 1L9 6H7V12H3V6H1Z" fill="#7ccf3a" stroke="#3f8d12"/><path d="M9 11.500H11M13 11.500H15" stroke="#3f8d12" stroke-width="2"/></svg></div>
        <div class="it d-flex"><svg width="16" height="16"><use href="#pc" width="14" height="16"/></svg><span data-w="28">102-1</span></div>
        <div class="it d-flex"><svg width="16" height="16"><use href="#pc" width="14" height="16"/></svg><span data-w="29">102-2</span></div>
        <div class="it d-flex"><svg width="16" height="16"><use href="#pc" width="14" height="16"/></svg><span data-w="46">FM88 tui</span></div>
        <div class="it d-flex"><svg width="16" height="16"><use href="#pc" width="14" height="16"/></svg><span data-w="61">FM96.25 tui</span></div>
        <div class="it pick d-flex"><svg width="15" height="16"><use href="#pc" width="14" height="16"/><rect width="14" height="16" fill="#39f" opacity=".5"/></svg><span class="hl"><span data-w="57">Mix3 FM90</span></span></div>
        <div class="it d-flex"><svg width="16" height="16"><use href="#pc" width="14" height="16"/></svg><span data-w="57">Mix3 FM96</span></div>
      </div>
    </div>
    <div class="status d-flex"><span data-w="141">Address: fmaia.dyndns.org</span><span data-w="52" class="g12">Port: 7777</span><i></i><span data-w="62">Full Control</span><svg width="10" height="10" class="ms-auto mt-auto mb-1"><path d="M7 1H9M4 4H9M1 7H9" stroke="#aaa" stroke-width="2" stroke-dasharray="2 1"/></svg></div>
  </div>
</div>

<!-- notifications -->
<div class="toastbox ta position-absolute d-flex"><div><strong class="d-block"><span data-w="241">An anonymous user has connected.</span></strong><div class="msg"><span data-w="193">Number of connected users: 1</span></div></div><div class="pic ms-auto bg-white d-flex align-items-center justify-content-center"><svg width="26" height="22"><use href="#vnc" width="26" height="22"/></svg></div></div>
<div class="toastbox tc position-absolute d-flex"><div><strong class="d-block"><span data-w="260">An anonymous user has disconnected.</span></strong><div class="msg"><span data-w="226">There are now no connected users.</span></div></div><div class="pic ms-auto bg-white d-flex align-items-center justify-content-center"><svg width="26" height="22"><use href="#vnc" width="26" height="22"/></svg></div></div>
<div class="toastbox te position-absolute d-flex"><div><strong class="d-block"><span data-w="241">An anonymous user has connected.</span></strong><div class="msg"><span data-w="193">Number of connected users: 1</span></div></div><div class="pic ms-auto bg-white d-flex align-items-center justify-content-center"><svg width="26" height="22"><use href="#vnc" width="26" height="22"/></svg></div></div>
<div class="upg position-absolute d-flex"><svg width="44" height="37"><use href="#vnc" width="44" height="37"/></svg><div><div><span data-w="231">Upgrade your VNC Server license in order to</span></div><div><span data-w="229">benefit from premium security features and</span></div><div><span data-w="246">performance enhancements. Visit the RealVNC</span></div><div><span data-w="161">web site for more information.</span></div></div></div>
</div>

<script src="https://cdn.jsdelivr.net/npm/bootstrap@5.3.0/dist/js/bootstrap.bundle.min.js"></script>
<script>
const seg = new Intl.Segmenter('th', {granularity: 'grapheme'});
document.querySelectorAll('[data-w]').forEach(el => {
  const n = [...seg.segment(el.textContent)].length;
  const gap = (el.dataset.w - el.getBoundingClientRect().width) / n;
  el.style.letterSpacing = gap.toFixed(3) + 'px';
});
</script>
</body>
</html>
